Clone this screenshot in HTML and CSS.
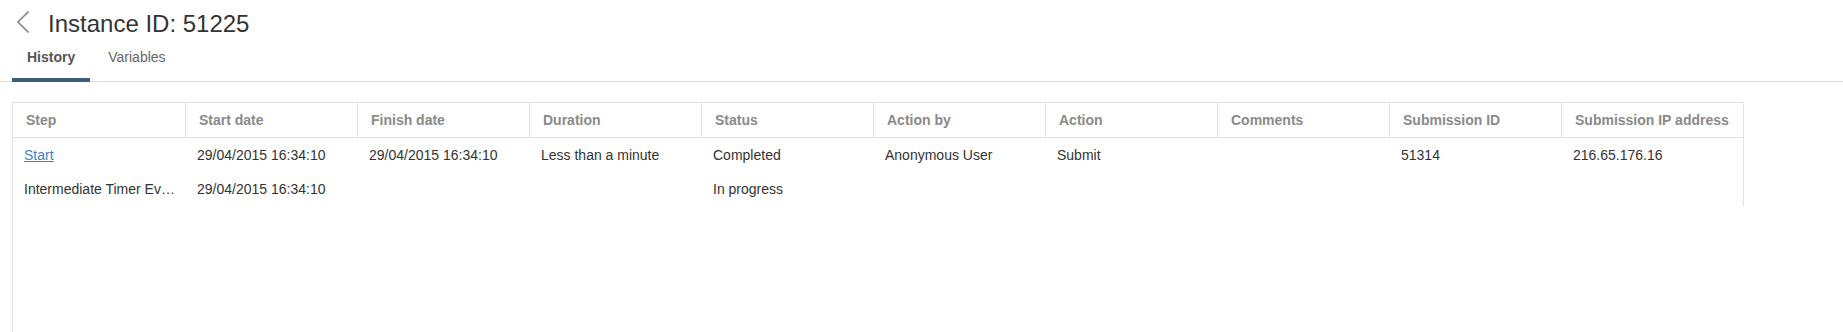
FILE: index.html
```html
<!DOCTYPE html>
<html lang="en">

<head>
    <meta charset="UTF-8">
    <meta name="viewport" content="width=device-width, initial-scale=1.0">
    <title>Instance ID: 51225</title>
    <link rel="stylesheet" href="styles.css">
</head>

<body>
    <header class="page-header">
        <a class="back-link" href="#" aria-label="Back">
            <svg width="12" height="22" viewBox="0 0 12 22">
                <path d="M11.5 0.5 L1 11 L11.5 21.5" fill="none" stroke="#8c8c8c" stroke-width="1.6"/>
            </svg>
        </a>
        <h1 class="page-title">Instance ID: 51225</h1>
    </header>

    <nav class="tabs">
        <a class="tab active" href="#">History</a>
        <a class="tab" href="#">Variables</a>
    </nav>

    <div class="grid">
        <table class="history">
            <colgroup>
                <col class="col-first">
                <col class="col">
                <col class="col">
                <col class="col">
                <col class="col">
                <col class="col">
                <col class="col">
                <col class="col">
                <col class="col">
                <col class="col-last">
            </colgroup>
            <thead>
                <tr>
                    <th>Step</th>
                    <th>Start date</th>
                    <th>Finish date</th>
                    <th>Duration</th>
                    <th>Status</th>
                    <th>Action by</th>
                    <th>Action</th>
                    <th>Comments</th>
                    <th>Submission ID</th>
                    <th>Submission IP address</th>
                </tr>
            </thead>
            <tbody>
                <tr>
                    <td><a href="#" class="step-link">Start</a></td>
                    <td>29/04/2015 16:34:10</td>
                    <td>29/04/2015 16:34:10</td>
                    <td>Less than a minute</td>
                    <td>Completed</td>
                    <td>Anonymous User</td>
                    <td>Submit</td>
                    <td></td>
                    <td>51314</td>
                    <td>216.65.176.16</td>
                </tr>
                <tr>
                    <td>Intermediate Timer Event</td>
                    <td>29/04/2015 16:34:10</td>
                    <td></td>
                    <td></td>
                    <td>In progress</td>
                    <td></td>
                    <td></td>
                    <td></td>
                    <td></td>
                    <td></td>
                </tr>
            </tbody>
        </table>
    </div>
</body>

</html>
```

FILE: styles.css
```css
body {
    margin: 0;
    font-family: "Liberation Sans", Arial, sans-serif;
    font-size: 14px;
    color: #333;
    background: #fff;
    overflow: hidden;
}

.page-header {
    display: flex;
    align-items: flex-start;
    height: 40px;
    padding-left: 17px;
    box-sizing: border-box;
}

.back-link {
    display: flex;
    width: 12px;
    height: 22px;
    margin: 11px 19px 0 0;
}

.page-title {
    margin: 8px 0 0;
    font-size: 24px;
    font-weight: normal;
    line-height: 32px;
    color: #333;
}

.tabs {
    display: flex;
    gap: 3px;
    padding-left: 12px;
    border-bottom: 1px solid #dddddd;
}

.tab {
    display: block;
    padding: 7px 15px 11px;
    line-height: 20px;
    color: #666;
    text-decoration: none;
    border-bottom: 4px solid transparent;
    margin-bottom: -1px;
}

.tab.active {
    font-weight: bold;
    color: #555;
    border-bottom-color: #3e5c76;
}

.grid {
    margin: 20px 0 0 12px;
    width: 1731px;
    height: 229px;
    border-top: 1px solid #e2e2e2;
    border-left: 1px solid #e2e2e2;
}

.history {
    table-layout: fixed;
    border-collapse: separate;
    border-spacing: 0;
    width: 1731px;
}

.col-first {
    width: 173px;
}

.col {
    width: 172px;
}

.col-last {
    width: 182px;
}

.history th {
    height: 34px;
    padding: 0 6px 0 13px;
    text-align: left;
    font-weight: bold;
    color: #8a8a8a;
    border-right: 1px solid #e2e2e2;
    border-bottom: 1px solid #e2e2e2;
    white-space: nowrap;
    overflow: hidden;
}

.history td {
    height: 34px;
    padding: 0 6px 0 11px;
    color: #333;
    white-space: nowrap;
    overflow: hidden;
    text-overflow: ellipsis;
}

.history td:last-child {
    border-right: 1px solid #e2e2e2;
}

.step-link {
    color: #3d7fc6;
    text-decoration: underline;
}
```
